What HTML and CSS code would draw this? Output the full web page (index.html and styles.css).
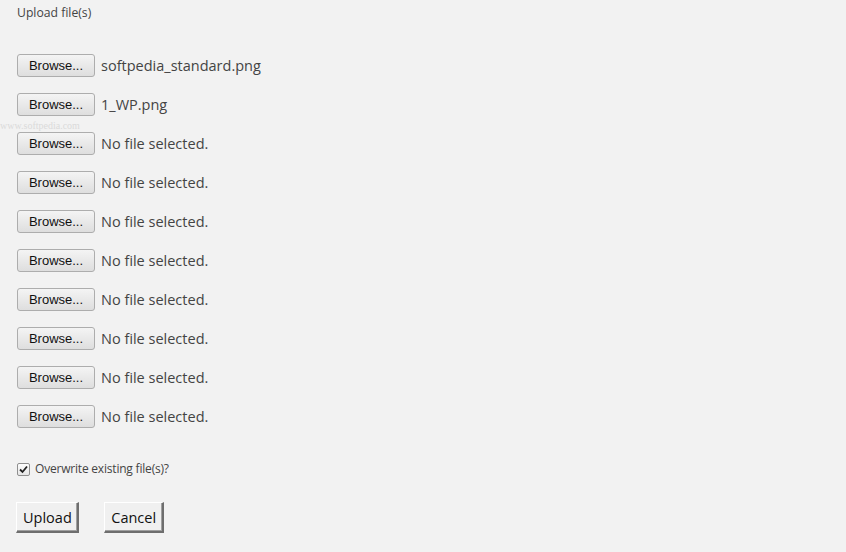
FILE: index.html
```html
<!DOCTYPE html>
<html>
<head>
<meta charset="utf-8">
<link rel="stylesheet" href="styles.css">
</head>
<body>
<div class="page">
  <div class="title">Upload file(s)</div>
  <div class="files">
    <div class="row"><span class="browse">Browse...</span><span class="name">softpedia_standard.png</span></div>
    <div class="row"><span class="browse">Browse...</span><span class="name">1_WP.png</span></div>
    <div class="row"><span class="browse">Browse...</span><span class="name">No file selected.</span></div>
    <div class="row"><span class="browse">Browse...</span><span class="name">No file selected.</span></div>
    <div class="row"><span class="browse">Browse...</span><span class="name">No file selected.</span></div>
    <div class="row"><span class="browse">Browse...</span><span class="name">No file selected.</span></div>
    <div class="row"><span class="browse">Browse...</span><span class="name">No file selected.</span></div>
    <div class="row"><span class="browse">Browse...</span><span class="name">No file selected.</span></div>
    <div class="row"><span class="browse">Browse...</span><span class="name">No file selected.</span></div>
    <div class="row"><span class="browse">Browse...</span><span class="name">No file selected.</span></div>
  </div>
  <label class="check">
    <span class="box"><svg width="11" height="11" viewBox="0 0 11 11"><path d="M2 5.5 L4.5 8 L9 2.5" fill="none" stroke="#222" stroke-width="1.8"/></svg></span>
    <span>Overwrite existing file(s)?</span>
  </label>
  <div class="actions">
    <span class="btn">Upload</span>
    <span class="btn">Cancel</span>
  </div>
  <div class="wm-url">www.softpedia.com</div>
</div>
</body>
</html>
```

FILE: styles.css
```css
html, body {
  margin: 0;
  padding: 0;
  background: #f2f2f2;
}
.page {
  position: relative;
  width: 846px;
  height: 552px;
  padding: 5px 0 0 17px;
  box-sizing: border-box;
  font-family: "Open Sans", "Liberation Sans", sans-serif;
  color: #444;
  overflow: hidden;
}
.title {
  font-size: 12.2px;
  line-height: 16px;
}
.files {
  margin-top: 33px;
  display: flex;
  flex-direction: column;
  gap: 16px;
}
.row {
  display: flex;
  align-items: center;
  height: 23px;
}
.browse {
  box-sizing: border-box;
  width: 78px;
  height: 23px;
  border: 1px solid #adadad;
  border-radius: 3px;
  background: linear-gradient(#f4f4f4, #dedede);
  font-family: "Liberation Sans", Arial, sans-serif;
  font-size: 13px;
  color: #111;
  display: flex;
  align-items: center;
  justify-content: center;
}
.name {
  margin-left: 6px;
  font-size: 14.5px;
  color: #444;
}
.check {
  display: flex;
  align-items: center;
  gap: 5px;
  margin-top: 33px;
  font-size: 12px;
  letter-spacing: -0.2px;
  line-height: 16px;
  color: #444;
}
.box {
  box-sizing: border-box;
  width: 13px;
  height: 13px;
  border: 1px solid #8f8f8f;
  border-radius: 2px;
  background: linear-gradient(#fdfdfd, #e6e6e6);
  display: flex;
  align-items: center;
  justify-content: center;
}
.actions {
  display: flex;
  gap: 25px;
  margin-top: 25px;
  margin-left: -1px;
}
.btn {
  box-sizing: border-box;
  height: 31px;
  padding: 0 5.5px 0 6px;
  display: flex;
  align-items: center;
  font-size: 14.5px;
  color: #111;
  background: #f0f0f0;
  border-top: 1px solid #ffffff;
  border-left: 1px solid #ffffff;
  border-right: 2px solid #6e6e6e;
  border-bottom: 2px solid #6e6e6e;
  box-shadow: inset -1px -1px 0 #a0a0a0;
}
.wm-url {
  position: absolute;
  left: 0;
  top: 120px;
  font-family: "Liberation Serif", serif;
  font-size: 10px;
  line-height: 11px;
  color: #dadada;
}
```
